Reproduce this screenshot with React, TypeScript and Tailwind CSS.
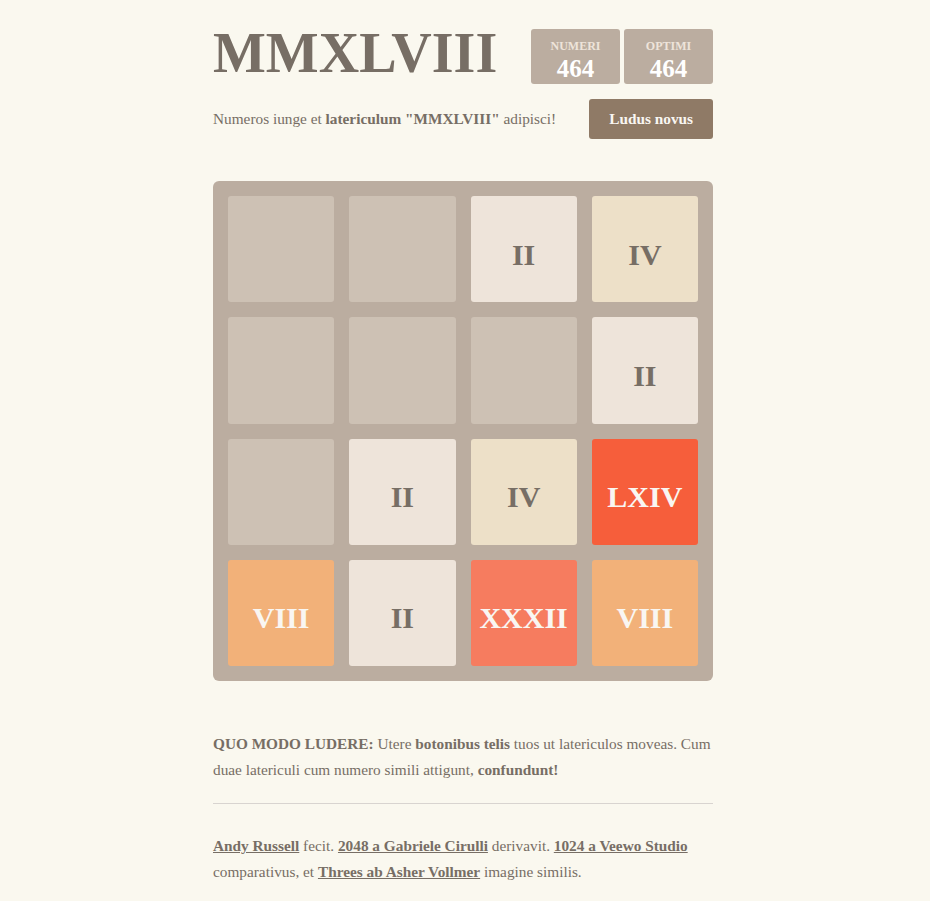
const BOARD = [
  [0, 0, 2, 4],
  [0, 0, 0, 2],
  [0, 2, 4, 64],
  [8, 2, 32, 8],
]

const ROMAN: Record<number, string> = { 2: 'II', 4: 'IV', 8: 'VIII', 32: 'XXXII', 64: 'LXIV' }

const TILE_STYLE: Record<number, string> = {
  0: 'bg-[#cdc1b4]',
  2: 'bg-[#eee4da] text-[#776e65]',
  4: 'bg-[#ede0c8] text-[#776e65]',
  8: 'bg-[#f2b179] text-[#f9f6f2]',
  32: 'bg-[#f67c5f] text-[#f9f6f2]',
  64: 'bg-[#f65e3b] text-[#f9f6f2]',
}

function ScoreBox({ label, value }: { label: string; value: number }) {
  return (
    <div className="w-[89px] h-[55px] rounded-[3px] bg-[#bbada0] flex flex-col items-center pt-[11px]">
      <span className="text-[12px] leading-[12px] font-bold uppercase text-[#eee4da]">{label}</span>
      <span className="mt-[4px] text-[25px] leading-[25px] font-bold text-white">{value}</span>
    </div>
  )
}

export default function App() {
  return (
    <div
      className="min-h-screen bg-[#faf8ef] text-[#776e65] text-[15.3px] pr-[4px]"
      style={{ fontFamily: '"Liberation Serif", "Times New Roman", serif' }}
    >
      <div className="w-[500px] mx-auto pt-[25px] pb-[20px]">
        {/* Heading */}
        <div className="flex items-start justify-between">
          <h1 className="text-[56px] leading-[56px] font-bold m-0">MMXLVIII</h1>
          <div className="flex gap-[4px] mt-[4px]">
            <ScoreBox label="Numeri" value={464} />
            <ScoreBox label="Optimi" value={464} />
          </div>
        </div>

        {/* Above game */}
        <div className="flex items-center justify-between mt-[15px]">
          <p className="leading-[26px]">
            Numeros iunge et <strong>latericulum "MMXLVIII"</strong> adipisci!
          </p>
          <button className="h-[40px] px-[20px] rounded-[3px] bg-[#8f7a66] text-[#f9f6f2] font-bold text-[15.3px]">
            Ludus novus
          </button>
        </div>

        {/* Board */}
        <div className="mt-[42px] w-[500px] h-[500px] rounded-[6px] bg-[#bbada0] p-[15px] grid grid-cols-4 grid-rows-4 gap-[15px]">
          {BOARD.flat().map((v, i) => (
            <div
              key={i}
              className={`rounded-[3px] flex items-center justify-center pt-[10px] text-[30px] font-bold ${TILE_STYLE[v]}`}
            >
              {v ? ROMAN[v] : ''}
            </div>
          ))}
        </div>

        {/* Explanation */}
        <p className="mt-[50px] leading-[26px]">
          <strong>QUO MODO LUDERE:</strong> Utere <strong>botonibus telis</strong> tuos ut latericulos moveas. Cum
          duae latericuli cum numero simili attigunt, <strong>confundunt!</strong>
        </p>
        <hr className="mt-[20px] mb-[29px] border-0 border-t border-[#d8d4d0]" />
        <p className="leading-[26px]">
          <a href="#" className="font-bold underline">Andy Russell</a> fecit.{' '}
          <a href="#" className="font-bold underline">2048 a Gabriele Cirulli</a> derivavit.{' '}
          <a href="#" className="font-bold underline">1024 a Veewo Studio</a> comparativus, et{' '}
          <a href="#" className="font-bold underline">Threes ab Asher Vollmer</a> imagine similis.
        </p>
      </div>
    </div>
  )
}
